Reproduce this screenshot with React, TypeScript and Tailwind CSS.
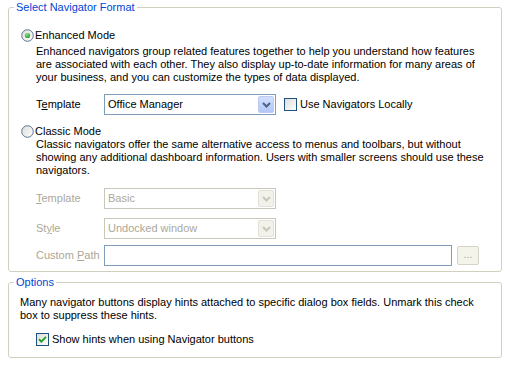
import React from 'react';

const Radio = ({ checked }: { checked?: boolean }) => (
  <svg width="13" height="13" viewBox="0 0 13 13" className="shrink-0">
    <defs>
      <linearGradient id={checked ? 'rg1' : 'rg2'} x1="0" y1="0" x2="1" y2="1">
        <stop offset="0" stopColor="#dcdcd6" />
        <stop offset="1" stopColor="#ffffff" />
      </linearGradient>
      <radialGradient id="dot" cx="0.4" cy="0.35" r="0.7">
        <stop offset="0" stopColor="#8de08a" />
        <stop offset="1" stopColor="#1f9a24" />
      </radialGradient>
    </defs>
    <circle cx="6.5" cy="6.5" r="5.8" fill={`url(#${checked ? 'rg1' : 'rg2'})`} stroke="#5b7591" strokeWidth="1" />
    {checked && <circle cx="6.5" cy="6.5" r="2.6" fill="url(#dot)" />}
  </svg>
);

const Check = ({ checked }: { checked?: boolean }) => (
  <svg width="13" height="13" viewBox="0 0 13 13" className="shrink-0">
    <defs>
      <linearGradient id={checked ? 'cg1' : 'cg2'} x1="0" y1="0" x2="1" y2="1">
        <stop offset="0" stopColor="#dcdcd6" />
        <stop offset="1" stopColor="#ffffff" />
      </linearGradient>
    </defs>
    <rect x="0.5" y="0.5" width="12" height="12" fill={`url(#${checked ? 'cg1' : 'cg2'})`} stroke="#1c5180" />
    {checked && <polyline points="3,6.2 5.3,8.6 10,3.8" fill="none" stroke="#21a121" strokeWidth="1.9" />}
  </svg>
);

const Arrow = ({ color }: { color: string }) => (
  <svg width="9" height="6" viewBox="0 0 9 6">
    <polyline points="1,1 4.5,4.5 8,1" fill="none" stroke={color} strokeWidth="2" />
  </svg>
);

const Select = ({ value, disabled }: { value: string; disabled?: boolean }) => (
  <div
    className={
      disabled
        ? 'flex h-[21px] w-[172px] items-center border border-[#c9c7ba] bg-white'
        : 'flex h-[21px] w-[172px] items-center border border-[#7f9db9] bg-white'
    }
  >
    <span className={disabled ? 'flex-1 pl-[3px] text-[#aca899]' : 'flex-1 pl-[3px]'}>{value}</span>
    <div
      className={
        disabled
          ? 'mr-px flex h-[17px] w-[16px] items-center justify-center rounded-[2px] border border-[#e3e1d6] bg-[#f2f1ea]'
          : 'mr-px flex h-[17px] w-[16px] items-center justify-center rounded-[2px] border border-[#bccbf5] bg-gradient-to-b from-[#d4dffc] to-[#b2c6f7]'
      }
    >
      <Arrow color={disabled ? '#c9c7ba' : '#4d6185'} />
    </div>
  </div>
);

const App = () => {
  return (
    <div className="min-h-[385px] bg-white px-2 pt-px font-['Liberation_Sans',Arial,sans-serif] text-[11px] leading-[13px] text-black">
      <fieldset className="w-[494px] rounded-[3px] border border-[#d0d0bf] pb-[5px]">
        <legend className="ml-[5px] px-[2px] text-[#0046d5]">Select Navigator Format</legend>

        <div className="mt-[15px] flex items-center gap-px pl-[12px]">
          <Radio checked />
          <span>Enhanced Mode</span>
        </div>
        <div className="mt-[3px] whitespace-nowrap pl-[27px]">
          Enhanced navigators group related features together to help you understand how features
          <br />
          are associated with each other. They also display up-to-date information for many areas of
          <br />
          your business, and you can customize the types of data displayed.
        </div>

        <div className="mt-[10px] flex items-center pl-[27px]">
          <span className="w-[68px]">
            T<u>e</u>mplate
          </span>
          <Select value="Office Manager" />
          <div className="ml-[8px] flex items-center gap-[3px]">
            <Check />
            <span>Use Navigators Locally</span>
          </div>
        </div>

        <div className="mt-[10px] flex items-center gap-px pl-[12px]">
          <Radio />
          <span>Classic Mode</span>
        </div>
        <div className="whitespace-nowrap pl-[27px]">
          Classic navigators offer the same alternative access to menus and toolbars, but without
          <br />
          showing any additional dashboard information. Users with smaller screens should use these
          <br />
          navigators.
        </div>

        <div className="mt-[11px] flex items-center pl-[27px]">
          <span className="w-[68px] text-[#aca899]">
            <u>T</u>emplate
          </span>
          <Select value="Basic" disabled />
        </div>
        <div className="mt-[9px] flex items-center pl-[27px]">
          <span className="w-[68px] text-[#aca899]">
            St<u>y</u>le
          </span>
          <Select value="Undocked window" disabled />
        </div>
        <div className="mt-[6px] flex items-center pl-[27px]">
          <span className="w-[68px] text-[#aca899]">
            Custom <u>P</u>ath
          </span>
          <div className="h-[21px] w-[348px] border border-[#7f9db9] bg-white" />
          <div className="ml-[5px] flex h-[19px] w-[22px] items-center justify-center rounded-[2px] border border-[#d5d3c8] bg-[#f5f4ea] pb-[3px] text-[#aca899]">
            ...
          </div>
        </div>
      </fieldset>

      <fieldset className="mt-[4px] w-[494px] rounded-[3px] border border-[#d0d0bf] pb-[11px]">
        <legend className="ml-[5px] px-[2px] text-[#0046d5]">Options</legend>
        <div className="mt-[7px] whitespace-nowrap pl-[11px]">
          Many navigator buttons display hints attached to specific dialog box fields. Unmark this check
          <br />
          box to suppress these hints.
        </div>
        <div className="mt-[11px] flex items-center gap-[3px] pl-[27px]">
          <Check checked />
          <span>Show hints when using Navigator buttons</span>
        </div>
      </fieldset>
    </div>
  );
};

export default App;
